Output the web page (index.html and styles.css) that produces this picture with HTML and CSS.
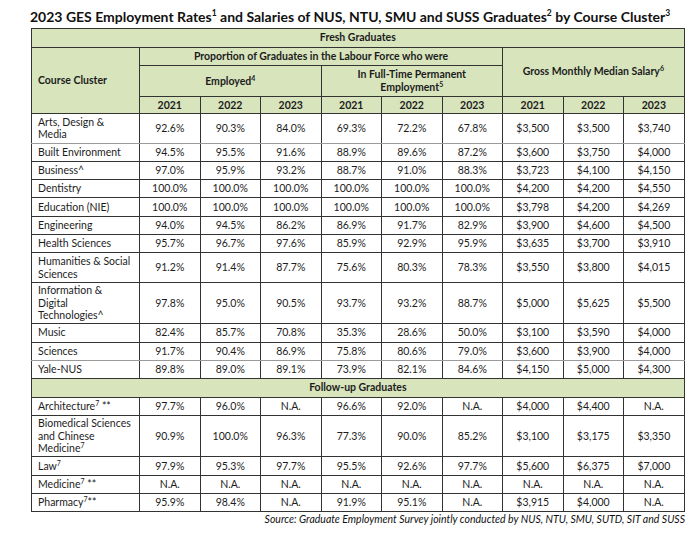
FILE: index.html
```html
<!DOCTYPE html>
<html>
<head>
<meta charset="utf-8">
<link rel="stylesheet" href="styles.css">
</head>
<body>
<div class="page">
  <h1 class="title">2023 GES Employment Rates<sup>1</sup> and Salaries of NUS, NTU, SMU and SUSS Graduates<sup>2</sup> by Course Cluster<sup>3</sup></h1>
  <table class="grid">
    <colgroup>
      <col class="c-name">
      <col span="9" class="c-val">
    </colgroup>
    <thead>
      <tr class="h-band"><th colspan="10" class="band">Fresh Graduates</th></tr>
      <tr class="h1">
        <th rowspan="3" class="left">Course Cluster</th>
        <th colspan="6">Proportion of Graduates in the Labour Force who were</th>
        <th colspan="3" rowspan="2">Gross Monthly Median Salary<sup>6</sup></th>
      </tr>
      <tr class="h2">
        <th colspan="3">Employed<sup>4</sup></th>
        <th colspan="3">In Full-Time Permanent<br>Employment<sup>5</sup></th>
      </tr>
      <tr class="h3">
        <th>2021</th><th class="g">2022</th><th class="g">2023</th>
        <th>2021</th><th>2022</th><th>2023</th>
        <th>2021</th><th class="g">2022</th><th class="g">2023</th>
      </tr>
    </thead>
    <tbody>
      <tr class="r2 gb"><td class="left">Arts, Design &amp;<br>Media</td><td>92.6%</td><td class="g">90.3%</td><td class="g">84.0%</td><td>69.3%</td><td>72.2%</td><td>67.8%</td><td>$3,500</td><td class="g">$3,500</td><td class="g">$3,740</td></tr>
      <tr><td class="left">Built Environment</td><td>94.5%</td><td class="g">95.5%</td><td class="g">91.6%</td><td>88.9%</td><td>89.6%</td><td>87.2%</td><td>$3,600</td><td class="g">$3,750</td><td class="g">$4,000</td></tr>
      <tr><td class="left">Business^</td><td>97.0%</td><td class="g">95.9%</td><td class="g">93.2%</td><td>88.7%</td><td>91.0%</td><td>88.3%</td><td>$3,723</td><td class="g">$4,100</td><td class="g">$4,150</td></tr>
      <tr><td class="left">Dentistry</td><td>100.0%</td><td class="g">100.0%</td><td class="g">100.0%</td><td>100.0%</td><td>100.0%</td><td>100.0%</td><td>$4,200</td><td class="g">$4,200</td><td class="g">$4,550</td></tr>
      <tr><td class="left">Education (NIE)</td><td>100.0%</td><td class="g">100.0%</td><td class="g">100.0%</td><td>100.0%</td><td>100.0%</td><td>100.0%</td><td>$3,798</td><td class="g">$4,200</td><td class="g">$4,269</td></tr>
      <tr><td class="left">Engineering</td><td>94.0%</td><td class="g">94.5%</td><td class="g">86.2%</td><td>86.9%</td><td>91.7%</td><td>82.9%</td><td>$3,900</td><td class="g">$4,600</td><td class="g">$4,500</td></tr>
      <tr><td class="left">Health Sciences</td><td>95.7%</td><td class="g">96.7%</td><td class="g">97.6%</td><td>85.9%</td><td>92.9%</td><td>95.9%</td><td>$3,635</td><td class="g">$3,700</td><td class="g">$3,910</td></tr>
      <tr class="r2"><td class="left">Humanities &amp; Social<br>Sciences</td><td>91.2%</td><td class="g">91.4%</td><td class="g">87.7%</td><td>75.6%</td><td>80.3%</td><td>78.3%</td><td>$3,550</td><td class="g">$3,800</td><td class="g">$4,015</td></tr>
      <tr class="r3"><td class="left">Information &amp;<br>Digital<br>Technologies^</td><td>97.8%</td><td class="g">95.0%</td><td class="g">90.5%</td><td>93.7%</td><td>93.2%</td><td>88.7%</td><td>$5,000</td><td class="g">$5,625</td><td class="g">$5,500</td></tr>
      <tr><td class="left">Music</td><td>82.4%</td><td class="g">85.7%</td><td class="g">70.8%</td><td>35.3%</td><td>28.6%</td><td>50.0%</td><td>$3,100</td><td class="g">$3,590</td><td class="g">$4,000</td></tr>
      <tr class="gb"><td class="left">Sciences</td><td>91.7%</td><td class="g">90.4%</td><td class="g">86.9%</td><td>75.8%</td><td>80.6%</td><td>79.0%</td><td>$3,600</td><td class="g">$3,900</td><td class="g">$4,000</td></tr>
      <tr><td class="left">Yale-NUS</td><td>89.8%</td><td class="g">89.0%</td><td class="g">89.1%</td><td>73.9%</td><td>82.1%</td><td>84.6%</td><td>$4,150</td><td class="g">$5,000</td><td class="g">$4,300</td></tr>
      <tr class="h-band"><th colspan="10" class="band">Follow-up Graduates</th></tr>
      <tr><td class="left">Architecture<sup>7</sup> **</td><td>97.7%</td><td class="g">96.0%</td><td class="g">N.A.</td><td>96.6%</td><td>92.0%</td><td>N.A.</td><td>$4,000</td><td class="g">$4,400</td><td class="g">N.A.</td></tr>
      <tr class="r3"><td class="left">Biomedical Sciences<br>and Chinese<br>Medicine<sup>7</sup></td><td>90.9%</td><td class="g">100.0%</td><td class="g">96.3%</td><td>77.3%</td><td>90.0%</td><td>85.2%</td><td>$3,100</td><td class="g">$3,175</td><td class="g">$3,350</td></tr>
      <tr><td class="left">Law<sup>7</sup></td><td>97.9%</td><td class="g">95.3%</td><td class="g">97.7%</td><td>95.5%</td><td>92.6%</td><td>97.7%</td><td>$5,600</td><td class="g">$6,375</td><td class="g">$7,000</td></tr>
      <tr><td class="left">Medicine<sup>7</sup> **</td><td>N.A.</td><td class="g">N.A.</td><td class="g">N.A.</td><td>N.A.</td><td>N.A.</td><td>N.A.</td><td>N.A.</td><td class="g">N.A.</td><td class="g">N.A.</td></tr>
      <tr><td class="left">Pharmacy<sup>7</sup>**</td><td>95.9%</td><td class="g">98.4%</td><td class="g">N.A.</td><td>91.9%</td><td>95.1%</td><td>N.A.</td><td>$3,915</td><td class="g">$4,000</td><td class="g">N.A.</td></tr>
    </tbody>
  </table>
  <p class="source">Source: Graduate Employment Survey jointly conducted by NUS, NTU, SMU, SUTD, SIT and SUSS</p>
</div>
</body>
</html>
```
FILE: styles.css
```css
* { box-sizing: border-box; }
html, body { margin: 0; padding: 0; background: #fff; }
body {
  font-family: Lato, "Open Sans", sans-serif;
  color: #1c1c1c;
}
.page {
  width: 699px;
  padding: 7px 0 0 30px;
}
.title {
  margin: 0;
  font-size: 14px;
  font-weight: 700;
  line-height: 20px;
  height: 21px;
  white-space: nowrap;
  color: #111;
}
.title sup {
  font-size: 8.5px;
  vertical-align: 6px;
  line-height: 0;
}
.grid {
  width: 653px;
  margin-left: 1px;
  border-collapse: collapse;
  table-layout: fixed;
  font-size: 10.5px;
  line-height: 13px;
  border: 1px solid #8a8a8a;
}
.c-name { width: 108px; }
.c-val { width: 60.5px; }
.grid th, .grid td {
  border: 1px solid #333;
  padding: 1px 2px;
  text-align: center;
  vertical-align: middle;
  white-space: nowrap;
  overflow: hidden;
}
.grid th {
  background: #d8e4bc;
  font-weight: 700;
}
.grid .left {
  text-align: left;
  padding-left: 6px;
}
.grid td.g, .grid th.g { border-left-color: #9a9a9a; }
.h-band th { height: 18.5px; }
.h1 th { height: 18px; }
.h2 th { height: 31.5px; line-height: 12.5px; }
.h3 th { height: 17px; }
.grid tbody tr td { height: 18.3px; }
.grid tbody tr.r2 td { height: 29.5px; line-height: 12.5px; }
.grid tbody tr.r3 td { height: 41.5px; line-height: 12.5px; }
.grid tbody tr.h-band th { height: 18.5px; }
.grid tr.gb td { border-bottom-color: #9a9a9a; }
.grid sup {
  font-size: 7px;
  vertical-align: 4px;
  line-height: 0;
}
.source {
  margin: 0;
  width: 655px;
  text-align: right;
  font-style: italic;
  font-size: 10.5px;
  line-height: 14px;
  color: #111;
}
```
